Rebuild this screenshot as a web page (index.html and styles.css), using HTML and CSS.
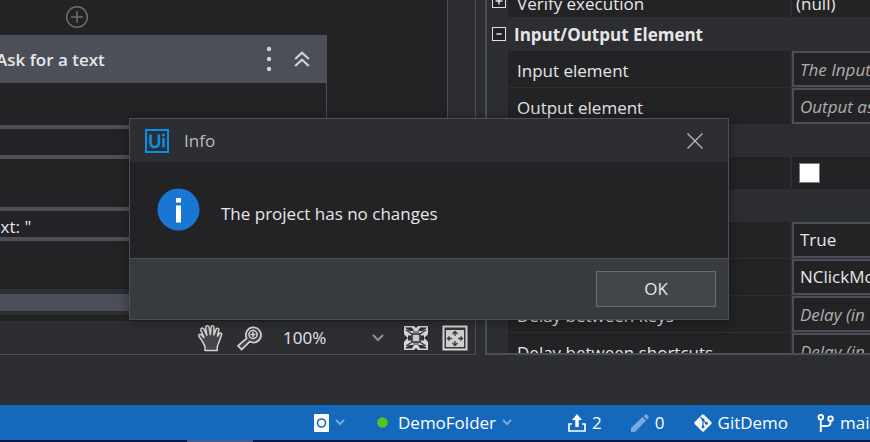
FILE: index.html
```html
<!DOCTYPE html>
<html lang="en">
<head>
<meta charset="utf-8">
<title>Studio</title>
<link rel="stylesheet" href="styles.css">
</head>
<body>
<div class="app">
  <main class="workspace">
    <section class="designer">
      <div class="designer-main">
        <div class="canvas">
          <button class="add" aria-label="Add activity">
            <svg width="24" height="24" viewBox="0 0 24 24"><circle cx="12" cy="12" r="10.3"/><path d="M12 6v12M6 12h12"/></svg>
          </button>
          <article class="card">
            <header class="card-head">
              <h2>Ask for a text</h2>
              <button aria-label="More">
                <svg width="6" height="26" viewBox="0 0 6 26"><g fill="#d2d2d4"><circle cx="3" cy="3" r="2.2"/><circle cx="3" cy="13" r="2.2"/><circle cx="3" cy="23" r="2.2"/></g></svg>
              </button>
              <button aria-label="Collapse">
                <svg width="16" height="16" viewBox="0 0 16 16" fill="none" stroke="#d2d2d4" stroke-width="2.2"><path d="M1.2 8 8 1.8 14.8 8M1.2 15 8 8.8 14.8 15"/></svg>
              </button>
            </header>
            <div class="card-body">
              <div class="field"></div>
              <div class="field">ext: "</div>
            </div>
          </article>
          <div class="hscroll"><div class="thumb"></div></div>
        </div>
        <div class="vscroll"></div>
      </div>
      <div class="zoombar">
        <button aria-label="Pan">
          <svg width="26" height="28" viewBox="0 0 26 28"><path d="M8 26.5V22.5C6.500 19 5.500 16.500 2 12.500C.8 10.800 2.800 9.400 4.300 10.800L7 13.500 3.800 6.200C3.300 4 6 3.200 7 5.200L9.800 11.300 8.700 3.800C8.600 1.400 11.500 1 12 3.200L13.400 10.700 14 3.300C14.300 1.200 17.100 1.400 17 3.600L16.900 11 19 5.400C19.800 3.500 22.300 4.200 21.900 6.200L20.500 12.200 22.200 9.800C23.500 8.300 25.200 9.300 24.600 11L22.200 17.500C21.500 20 20.500 21 20.200 23V26.500Z" fill="#454547" stroke="#d4d4d4" stroke-width="1.500" stroke-linejoin="round"/></svg>
        </button>
        <button aria-label="Zoom">
          <svg width="26" height="26" viewBox="0 0 26 26"><path d="M10.600 13.300 2 20.800 5.700 24.500 13.700 16.600A7.600 7.600 0 1 0 10.600 13.300Z" fill="#454547" stroke="#d4d4d4" stroke-width="1.700"/><circle cx="17" cy="9.500" r="4" fill="#39393b" stroke="#d4d4d4" stroke-width="1.500"/><path d="M17 7v5M14.500 9.500h5" stroke="#d4d4d4" stroke-width="1.500"/></svg>
        </button>
        <label class="zoom">
          <select aria-label="Zoom level"><option>100%</option></select>
          <svg width="12" height="8" viewBox="0 0 12 8" fill="none" stroke="#8d8f93" stroke-width="2"><path d="M1 1l5 5 5-5"/></svg>
        </label>
        <button aria-label="Fit to screen">
          <svg width="26" height="26" viewBox="0 0 26 26"><path d="M1 1h10l2 2 2-2h10v8l-3 4 3 4v8H15l-2-2-2 2H1v-8l3-4-3-4Z" fill="#d6d6d6"/><path d="M3.500 3h5L10 5.500H6.500ZM22.500 3h-5L16 5.500h3.500ZM3.500 23h5l1.500-2.500H6.500ZM22.500 23h-5L16 20.500h3.500ZM3 5l6 4M23 5l-6 4M3 21l6-4M23 21l-6-4M1 10.500 4 13l-3 2.500M25 10.500 22 13l3 2.500M5 11h3v4H5M21 11h-3v4h3M10 7h6M10 19h6" fill="#303134" stroke="#303134" stroke-width="1.200"/><path d="M9 9h8v8H9Z" fill="#c9c9c9" stroke="#303134" stroke-width="1.500"/></svg>
        </button>
        <button aria-label="Overview">
          <svg width="26" height="26" viewBox="0 0 26 26"><path d="M1.500 1.500h23v23h-23Z" fill="#38383b" stroke="#d6d6d6" stroke-width="2"/><path d="M4 5h18v17H4Z" fill="#cfcfcf"/><path d="M13 6.500V11M13 16v4.500M5.500 13.500H10M16 13.500h4.500M10.500 9 13 6.500 15.500 9M10.500 18l2.500 2.500 2.500-2.500M7.500 11.500l-2 2 2 2M18.500 11.500l2 2-2 2" fill="none" stroke="#38383b" stroke-width="1.300"/></svg>
        </button>
      </div>
    </section>

    <section class="properties">
      <div class="rows">
        <div class="row first"><span class="gutter"><button class="toggle" aria-label="Expand"><svg width="14" height="14" viewBox="0 0 14 14"><path d="M3 7h8M7 3v8"/></svg></button></span><span class="name">Verify execution</span><span class="value">(null)</span></div>
        <div class="group titled"><span class="gutter"><button class="toggle" aria-label="Collapse group"><svg width="14" height="14" viewBox="0 0 14 14"><path d="M4 7h6"/></svg></button></span><h3>Input/Output Element</h3></div>
        <div class="row"><span class="gutter"></span><label class="name" for="in">Input element</label><span class="value"><input id="in" type="text" placeholder="The Input"></span></div>
        <div class="row"><span class="gutter"></span><label class="name" for="out">Output element</label><span class="value"><input id="out" type="text" placeholder="Output as"></span></div>
        <div class="group"></div>
        <div class="row short"><span class="gutter"></span><span class="name"></span><span class="value"><input type="checkbox" aria-label="Enabled"></span></div>
        <div class="group"></div>
        <div class="row"><span class="gutter"></span><span class="name"></span><span class="value"><select aria-label="Activate"><option>True</option></select></span></div>
        <div class="row"><span class="gutter"></span><span class="name"></span><span class="value"><select aria-label="Click mode"><option>NClickMode</option></select></span></div>
        <div class="row"><span class="gutter"></span><label class="name" for="keys">Delay between keys</label><span class="value"><input id="keys" type="text" placeholder="Delay (in"></span></div>
        <div class="row"><span class="gutter"></span><label class="name" for="cuts">Delay between shortcuts</label><span class="value"><input id="cuts" type="text" placeholder="Delay (in"></span></div>
      </div>
    </section>
  </main>

  <footer class="status">
    <button class="item robot" aria-label="Robot">
      <svg width="15" height="18" viewBox="0 0 15 18"><rect width="15" height="18" rx="1" fill="#fff"/><circle cx="7.500" cy="9" r="4" fill="none" stroke="#1469bd" stroke-width="1.600"/></svg>
      <svg class="chev" width="10" height="7" viewBox="0 0 10 7"><path d="M1 1l4 4 4-4"/></svg>
    </button>
    <button class="item folder">
      <svg width="11" height="11" viewBox="0 0 11 11"><circle cx="5.500" cy="5.500" r="5.300" fill="#52c41a"/></svg>
      <span>DemoFolder</span>
      <svg class="chev" width="10" height="7" viewBox="0 0 10 7"><path d="M1 1l4 4 4-4"/></svg>
    </button>
    <button class="item push">
      <svg width="18" height="18" viewBox="0 0 18 18"><path d="M9 0l5 6h-3.300v7H7.300V6H4Z" fill="#fff"/><path d="M4 10H1v7h16v-7h-3" fill="none" stroke="#fff" stroke-width="1.700"/></svg>
      <span>2</span>
    </button>
    <button class="item edits">
      <svg width="18" height="18" viewBox="0 0 18 18"><path d="M0 14 11.500 3 15 6.500 4 18H0ZM12.500 2 14.200.4Q15 0 15.700.6L17.500 2.500Q18 3.300 17.500 4L16 5.500Z" fill="#7aa9dc"/></svg>
      <span>0</span>
    </button>
    <button class="item repo">
      <svg width="18" height="18" viewBox="0 0 18 18"><path d="M8 .7Q9 0 10 .7L17.300 8Q18 9 17.300 10L10 17.300Q9 18 8 17.300L.7 10Q0 9 .7 8Z" fill="#fff"/><path d="M6.500 3 9 5.700V13M9 6l3.300 3.300" fill="none" stroke="#1469bd" stroke-width="1.200"/><g fill="#1469bd"><circle cx="9" cy="5.800" r="1.500"/><circle cx="9" cy="12.800" r="1.500"/><circle cx="12.400" cy="9.200" r="1.500"/></g></svg>
      <span>GitDemo</span>
    </button>
    <button class="item branch">
      <svg width="17" height="18" viewBox="0 0 17 18" fill="none" stroke="#fff" stroke-width="1.900"><circle cx="3.800" cy="3.300" r="2.300"/><circle cx="13.500" cy="4.700" r="2.300"/><path d="M3.800 5.600V18M13.500 7v1.500Q13.500 12 10 12H3.800"/></svg>
      <span>main</span>
    </button>
  </footer>
  <div class="taskbar"><span></span></div>
</div>

<div class="dialog" role="dialog" aria-labelledby="dialog-title">
  <header class="dialog-head">
    <svg width="24" height="24" viewBox="0 0 24 24" fill="none" stroke="#0a8fe8"><path d="M1 1h22v22H1Z" stroke-width="2"/><path d="M5.500 5.500v8.200q0 4.300 4.200 4.300t4.200-4.300V5.500M18.500 9v9.500" stroke-width="2.600"/><path d="M18.500 4.800v2.600" stroke-width="2.800"/></svg>
    <h1 id="dialog-title">Info</h1>
    <button class="close" aria-label="Close"><svg width="16" height="16" viewBox="0 0 16 16" stroke="#b9babb" stroke-width="1.300"><path d="M.5.5l15 15M15.500.5l-15 15"/></svg></button>
  </header>
  <div class="dialog-body">
    <svg width="43" height="43" viewBox="0 0 43 43"><circle cx="21.500" cy="20.500" r="21" fill="#1976d2"/><path d="M19 9h5v4.500h-5ZM19 16.500h5v17h-5Z" fill="#fff"/></svg>
    <p>The project has no changes</p>
  </div>
  <footer class="dialog-foot"><button class="ok">OK</button></footer>
</div>
</body>
</html>
```
FILE: styles.css
```css
* { box-sizing: border-box; }

body {
  margin: 0;
  background: #2d2e32;
  color: #e6e6e8;
  font: 17px/24px "Open Sans", "Noto Sans", sans-serif;
  overflow: hidden;
}

h1, h2, h3, p { margin: 0; font-size: inherit; font-weight: 400; }
svg { display: block; flex: none; overflow: visible; }
button, input, select { font: inherit; color: inherit; }
button { padding: 0; border: 0; background: none; flex: none; }
select { appearance: none; }

.app { display: flex; flex-direction: column; height: 100vh; }

.workspace {
  flex: 1;
  min-height: 0;
  display: flex;
  gap: 9px;
  padding-bottom: 50px;
}

/* Designer */
.designer {
  flex: 1;
  min-width: 0;
  display: flex;
  flex-direction: column;
  border-right: 1px solid #4c4f57;
  border-bottom: 1px solid #4c4f57;
}
.designer-main { flex: 1; min-height: 0; display: flex; }
.canvas {
  flex: 1;
  min-width: 0;
  display: flex;
  flex-direction: column;
  padding: 5px 0 6px;
  background: #232325;
}
.vscroll { width: 28px; border-left: 1px solid #4c4f57; }
.add { width: 24px; margin-left: 65px; }
.add svg { fill: none; stroke: #6d6d6f; stroke-width: 1.5; }
.card {
  flex: 1;
  width: 327px;
  margin-top: 6px;
  border-right: 1px solid #4c4f57;
}
.card-head {
  display: flex;
  align-items: center;
  gap: 22px;
  height: 48px;
  padding-right: 16px;
  background: #4c4f57;
}
.card-head h2 { flex: 1; margin-left: -4px; font-weight: 600; padding-top: 2px; }
.card-body { display: flex; flex-direction: column; gap: 48px; padding-top: 42px; }
.field {
  height: 34px;
  padding-top: 5px;
  border: solid #4c4f57;
  border-width: 4px 0;
  margin-left: -9px;
  line-height: 22px;
}
.hscroll { height: 26px; padding: 5px 0 4px; background: #2d2e32; }
.thumb { height: 17px; background: #4c4f57; }

.zoombar {
  display: flex;
  align-items: center;
  justify-content: flex-end;
  gap: 13px;
  height: 33px;
  padding-right: 7px;
}
.zoom { display: flex; align-items: center; width: 101px; margin: 0 6px 0 8px; }
.zoom select { flex: 1; padding: 0; border: 0; background: none; }

/* Properties */
.properties {
  width: 385px;
  border-left: 2px solid #4c4f57;
  border-bottom: 2px solid #4c4f57;
  overflow: hidden;
}
.rows { display: flex; flex-direction: column; gap: 1px; margin-top: -15px; }
.row { display: flex; height: 36px; flex: none; }
.row.first, .row.short, .group.titled { height: 32px; }
.group { display: flex; align-items: center; height: 31px; flex: none; }
.group h3 { font-weight: 700; padding: 2px 0 0 6px; }
.gutter { width: 21px; padding-left: 5px; flex: none; display: flex; align-items: center; }
.toggle { border: 1px solid #e0e0e0; background: #232325; }
.toggle svg { width: 12px; height: 12px; stroke: #e6e6e8; stroke-width: 1.7; }
.name {
  flex: 1;
  padding: 8px 0 0 9px;
  background: #232325;
  white-space: nowrap;
}
.value { width: 78px; margin-left: 2px; background: #232325; flex: none; }
.first .value { padding: 7px 4px; }
.first .name { padding-top: 7px; }
.value input[type="text"], .value select {
  width: 120px;
  height: 36px;
  padding: 0 6px;
  border: 2px solid #4c4f57;
  border-radius: 0;
  outline: none;
  background: #232325;
}
.value input::placeholder { color: #aeaeb0; font-style: italic; opacity: 1; }
.value input[type="checkbox"] {
  appearance: none;
  width: 21px;
  height: 20px;
  margin: 6px 7px;
  border: 1px solid #7b7b7d;
  background: #fff;
}

/* Status bar */
.status {
  display: flex;
  align-items: center;
  height: 35px;
  padding-left: 314px;
  background: #1469bd;
  color: #fff;
}
.item { display: flex; align-items: center; gap: 6px; white-space: nowrap; }
.chev { fill: none; stroke: #7aa9dc; stroke-width: 2; }
.folder { margin: 0 56px 0 32px; }
.folder span { padding-left: 4px; }
.edits { margin: 0 29px; }
.branch { margin-left: 29px; }
.taskbar { height: 2px; padding-left: 187px; background: #10184a; }
.taskbar span { display: block; width: 66px; height: 2px; background: #4a5a8c; }

/* Dialog */
.dialog {
  position: absolute;
  left: 129px;
  top: 118px;
  width: 600px;
  border: 1px solid #4c4f57;
  background: #232325;
  box-shadow: 0 1px 12px rgba(0, 0, 0, 0.4);
}
.dialog-head {
  display: flex;
  align-items: center;
  gap: 15px;
  height: 43px;
  padding: 0 25px 0 15px;
  background: #2d2e32;
  color: #b9babb;
}
.dialog-head h1 { flex: 1; }
.dialog-body {
  display: flex;
  align-items: center;
  gap: 21px;
  height: 96px;
  padding-left: 27px;
}
.dialog-body p { padding-top: 8px; }
.dialog-foot {
  display: flex;
  justify-content: flex-end;
  padding: 12px;
  height: 61px;
  border-top: 1px solid #4c4f57;
  background: #373a3e;
}
.ok {
  width: 120px;
  height: 36px;
  border: 1px solid #686c73;
  background: #424549;
}
```
